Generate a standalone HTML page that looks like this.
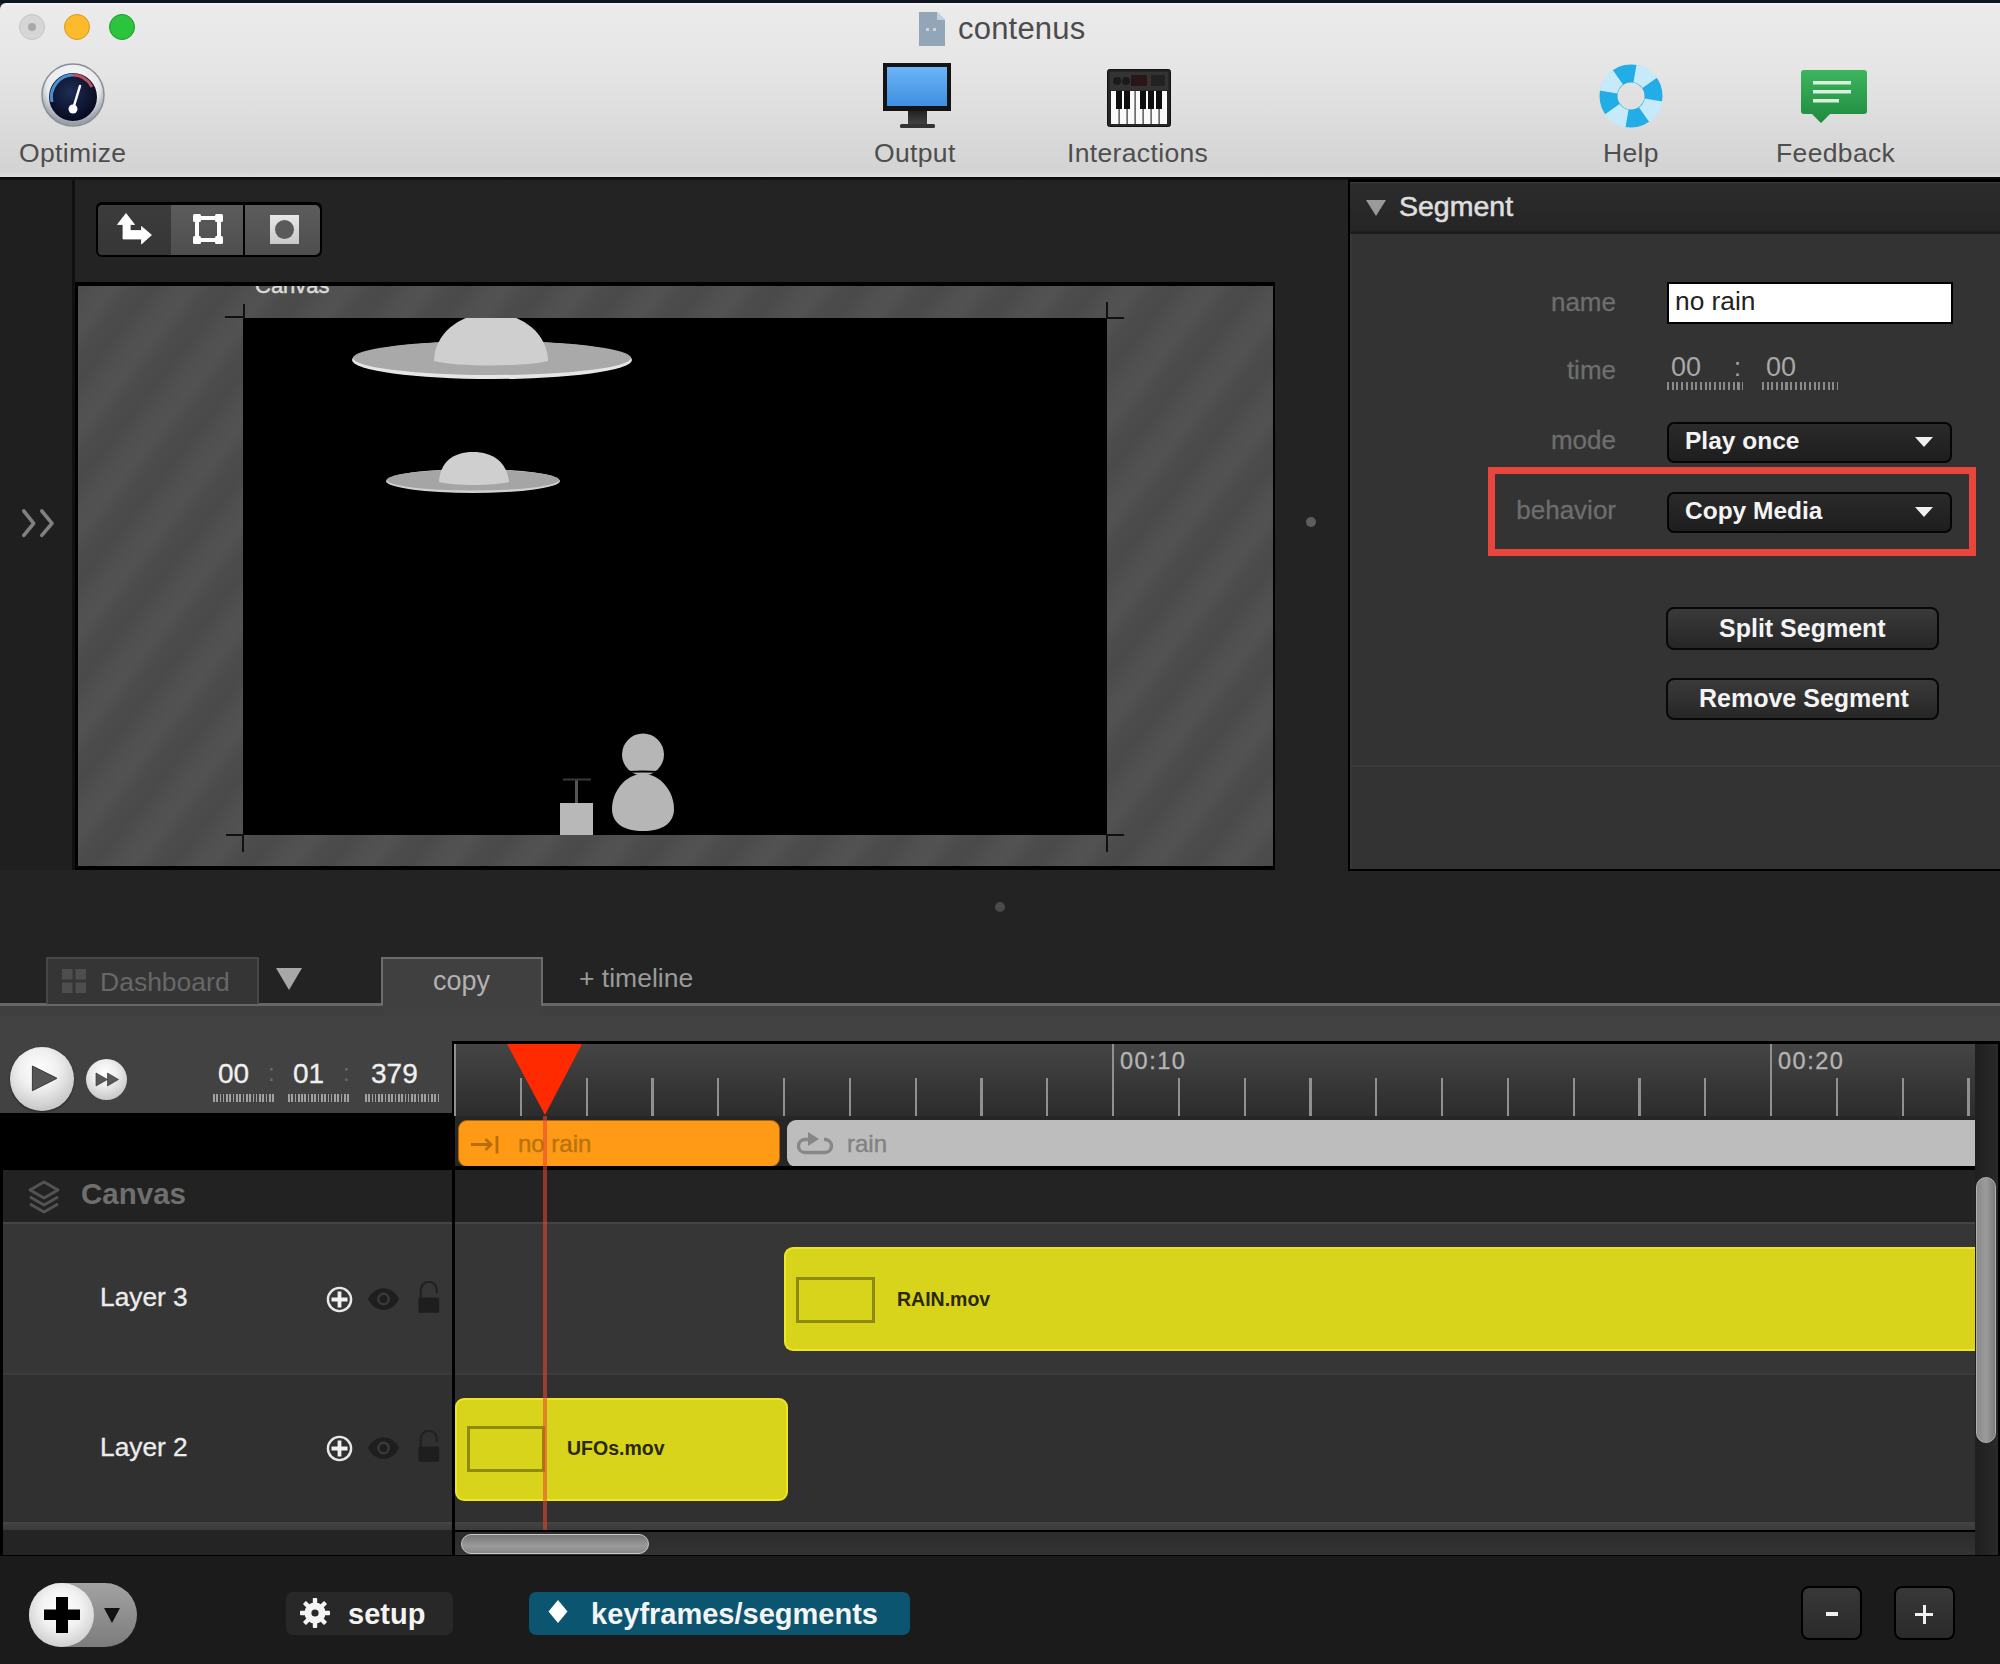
<!DOCTYPE html>
<html><head><meta charset="utf-8">
<style>
*{margin:0;padding:0;box-sizing:border-box}
html,body{width:2000px;height:1664px;overflow:hidden;background:#232323;font-family:"Liberation Sans",sans-serif}
.a{position:absolute}
.t{position:absolute;white-space:nowrap;line-height:1}
</style></head><body>
<!-- window top border -->
<div class="a" style="left:0;top:0;width:2000px;height:3px;background:#0e1420"></div>
<!-- toolbar -->
<div class="a" id="toolbar" style="left:0;top:3px;width:2000px;height:174px;background:linear-gradient(#f6f6f8,#ebebeb 3px,#e5e5e5 40%,#d3d3d3 97%,#dedede);border-radius:6px 0 0 0"></div>
<div class="a" style="left:0;top:177px;width:2000px;height:3px;background:linear-gradient(#0c0c0c 66%,#1a1a1a)"></div>
<!-- traffic lights -->
<div class="a" style="left:19px;top:14px;width:26px;height:26px;border-radius:50%;background:#d6d6d6;border:1px solid #c4c4c4"></div>
<div class="a" style="left:28px;top:23px;width:8px;height:8px;border-radius:50%;background:#a8a8a8"></div>
<div class="a" style="left:64px;top:14px;width:26px;height:26px;border-radius:50%;background:#fdba2c;border:1.5px solid #d69a18"></div>
<div class="a" style="left:109px;top:14px;width:26px;height:26px;border-radius:50%;background:#2bc43c;border:1.5px solid #189a28"></div>
<!-- title -->
<svg class="a" style="left:917px;top:11px" width="30" height="36" viewBox="0 0 30 36">
<path d="M2 1h18l8 8v26H2z" fill="#93a6b8"/><path d="M20 1v8h8z" fill="#c3d0dc"/>
<rect x="9" y="17" width="3" height="3" fill="#c8d4e0"/><rect x="16" y="17" width="3" height="3" fill="#c8d4e0"/>
</svg>
<div class="t" style="left:958px;top:13px;font-size:31px;letter-spacing:0.2px;color:#4c4c4c">contenus</div>

<!-- Optimize -->
<svg class="a" style="left:40px;top:62px" width="66" height="68" viewBox="0 0 66 68">
<defs>
<radialGradient id="og" cx="50%" cy="35%" r="60%"><stop offset="0" stop-color="#ffffff"/><stop offset="0.7" stop-color="#e8eaee"/><stop offset="1" stop-color="#9aa0a8"/></radialGradient>
<radialGradient id="od" cx="45%" cy="40%" r="60%"><stop offset="0" stop-color="#1f2c55"/><stop offset="1" stop-color="#070b20"/></radialGradient>
</defs>
<circle cx="33" cy="33" r="31" fill="url(#og)" stroke="#8a8f96" stroke-width="1.5"/>
<circle cx="33" cy="35" r="24" fill="url(#od)"/>
<path d="M12 40 A22 22 0 0 1 33 13" fill="none" stroke="#4a90d0" stroke-width="3"/>
<path d="M33 13 A22 22 0 0 1 52 25" fill="none" stroke="#c05060" stroke-width="3"/>
<path d="M33 47 L40 24" stroke="#fff" stroke-width="2.5" stroke-linecap="round"/>
<circle cx="33" cy="47" r="4.5" fill="#fff"/>
</svg>
<div class="t" style="left:19px;top:140px;font-size:26.5px;letter-spacing:0.35px;color:#4e4e4e">Optimize</div>

<!-- Output -->
<svg class="a" style="left:883px;top:63px" width="68" height="66" viewBox="0 0 68 66">
<defs><linearGradient id="scr" x1="0" y1="0" x2="0" y2="1"><stop offset="0" stop-color="#6cb4f8"/><stop offset="1" stop-color="#3f8fe0"/></linearGradient>
<linearGradient id="nk" x1="0" y1="0" x2="0" y2="1"><stop offset="0" stop-color="#222"/><stop offset="1" stop-color="#444"/></linearGradient></defs>
<rect x="0" y="0" width="68" height="48" fill="#141414"/>
<rect x="4" y="4" width="60" height="39" fill="url(#scr)"/>
<rect x="25" y="48" width="19" height="14" fill="url(#nk)"/>
<rect x="17" y="61" width="35" height="4" rx="1.5" fill="#333"/>
</svg>
<div class="t" style="left:874px;top:140px;font-size:26.5px;letter-spacing:0.35px;color:#4e4e4e">Output</div>

<!-- Interactions keyboard -->
<svg class="a" style="left:1107px;top:69px" width="64" height="58" viewBox="0 0 64 58">
<rect x="0.5" y="0.5" width="63" height="57" rx="2" fill="#262626" stroke="#111"/>
<rect x="3" y="3" width="58" height="18" fill="#333"/>
<circle cx="10" cy="12" r="4" fill="#1a1a1a"/><circle cx="19" cy="12" r="4" fill="#1a1a1a"/>
<rect x="24" y="6" width="16" height="11" fill="#2a1616"/>
<rect x="44" y="6" width="14" height="11" fill="#222"/>
<rect x="4" y="22" width="56" height="33" fill="#fafafa"/>
<g fill="#333"><rect x="11.5" y="22" width="1.2" height="33"/><rect x="19.5" y="22" width="1.2" height="33"/><rect x="27.5" y="22" width="1.2" height="33"/><rect x="35.5" y="22" width="1.2" height="33"/><rect x="43.5" y="22" width="1.2" height="33"/><rect x="51.5" y="22" width="1.2" height="33"/></g>
<g fill="#0e0e0e"><rect x="9" y="22" width="6" height="18"/><rect x="17" y="22" width="6" height="18"/><rect x="33" y="22" width="6" height="18"/><rect x="41" y="22" width="6" height="18"/><rect x="49" y="22" width="6" height="18"/></g>
</svg>
<div class="t" style="left:1067px;top:140px;font-size:26.5px;letter-spacing:0.35px;color:#4e4e4e">Interactions</div>

<!-- Help lifebuoy -->
<svg class="a" style="left:1598px;top:63px" width="66" height="66" viewBox="0 0 66 66">
<circle cx="33" cy="33" r="22.5" fill="none" stroke="#22ade6" stroke-width="18"/>
<g stroke="#c6eaf9" stroke-width="18" fill="none">
<path d="M33 10 A23 23 0 0 1 49.3 16.7" transform="rotate(10 33 33)"/>
<path d="M33 10 A23 23 0 0 1 49.3 16.7" transform="rotate(100 33 33)"/>
<path d="M33 10 A23 23 0 0 1 49.3 16.7" transform="rotate(190 33 33)"/>
<path d="M33 10 A23 23 0 0 1 49.3 16.7" transform="rotate(280 33 33)"/>
</g>
</svg>
<div class="t" style="left:1603px;top:140px;font-size:26.5px;letter-spacing:0.35px;color:#4e4e4e">Help</div>

<!-- Feedback -->
<svg class="a" style="left:1801px;top:70px" width="66" height="54" viewBox="0 0 66 54">
<defs><linearGradient id="fg" x1="0" y1="0" x2="0" y2="1"><stop offset="0" stop-color="#3cb55e"/><stop offset="1" stop-color="#1f8a3e"/></linearGradient></defs>
<path d="M3 0h60a3 3 0 0 1 3 3v38a3 3 0 0 1-3 3H29l-9 9-9-9H3a3 3 0 0 1-3-3V3a3 3 0 0 1 3-3z" fill="url(#fg)"/>
<g fill="#d8f0dc"><rect x="12" y="11" width="38" height="3.5"/><rect x="12" y="20" width="38" height="3.5"/><rect x="12" y="29" width="26" height="3.5"/></g>
</svg>
<div class="t" style="left:1776px;top:140px;font-size:26.5px;letter-spacing:0.35px;color:#4e4e4e">Feedback</div>


<!-- left sidebar -->
<div class="a" style="left:0;top:180px;width:72px;height:690px;background:#1f1f1f"></div>
<div class="a" style="left:72px;top:180px;width:3px;height:690px;background:#101010"></div>

<!-- canvas frame -->
<div class="a" style="left:75px;top:282px;width:1200px;height:588px;background:#000"></div>
<div class="a" id="frame" style="left:78px;top:286px;width:1195px;height:580px;background:repeating-linear-gradient(-52deg,#4a4a4a 0,#4c4c4c 16px,#525252 30px,#505050 44px,#4a4a4a 62px)"></div>
<div class="a" style="left:243px;top:318px;width:864px;height:517px;background:#000"></div>


<!-- left chevrons -->
<svg class="a" style="left:20px;top:507px" width="36" height="32" viewBox="0 0 36 32">
<path d="M3.8 4 L13.7 16.3 L3.8 28.3 M21.8 4 L32 16.3 L21.8 28.3" fill="none" stroke="#808080" stroke-width="3.6" stroke-linecap="round" stroke-linejoin="round"/>
</svg>
<!-- tool buttons -->
<div class="a" style="left:96px;top:202px;width:226px;height:55px;border-radius:6px;background:#000"></div>
<div class="a" style="left:98px;top:205px;width:73px;height:50px;border-radius:4px 0 0 4px;background:linear-gradient(#3c3c3c,#363636)"></div>
<div class="a" style="left:171px;top:205px;width:72px;height:50px;background:linear-gradient(#5c5c5c,#4e4e4e)"></div>
<div class="a" style="left:245px;top:205px;width:75px;height:50px;border-radius:0 5px 5px 0;background:linear-gradient(#5c5c5c,#4e4e4e)"></div>
<svg class="a" style="left:116px;top:212px" width="40" height="36" viewBox="0 0 40 36">
<path d="M10 1.5 L18.5 12.5 L14.2 12.5 L14.2 18.5 L25.5 18.5 L25.5 14.5 L35.5 23 L25.5 32 L25.5 27 L7 27 L7 12.5 L1.5 12.5 Z" fill="#fff" stroke="#fff" stroke-width="0.8" stroke-linejoin="round"/>
</svg>
<svg class="a" style="left:192px;top:213px" width="32" height="32" viewBox="0 0 32 32">
<rect x="5" y="5" width="22" height="22" fill="none" stroke="#fff" stroke-width="4"/>
<rect x="1" y="1" width="8" height="8" rx="1.5" fill="#fff"/><rect x="23" y="1" width="8" height="8" rx="1.5" fill="#fff"/>
<rect x="1" y="23" width="8" height="8" rx="1.5" fill="#fff"/><rect x="23" y="23" width="8" height="8" rx="1.5" fill="#fff"/>
</svg>
<div class="a" style="left:270px;top:215px;width:29px;height:29px;background:linear-gradient(#e8e8e8,#c8c8c8)"></div>
<div class="a" style="left:275px;top:220px;width:19px;height:19px;border-radius:50%;background:#5a5a5a"></div>

<!-- stage label (cut) -->
<div class="a" style="left:243px;top:286px;width:100px;height:10px;overflow:hidden">
<div class="t" style="left:12px;top:-11px;font-size:22px;color:#dadada;-webkit-text-stroke:0.5px #dadada">Canvas</div></div>
<!-- crop marks -->
<div class="a" style="left:243px;top:304px;width:2px;height:15px;background:#111"></div>
<div class="a" style="left:225px;top:316px;width:19px;height:2px;background:#111"></div>
<div class="a" style="left:1106px;top:302px;width:2px;height:17px;background:#111"></div>
<div class="a" style="left:1107px;top:317px;width:17px;height:2px;background:#111"></div>
<div class="a" style="left:242px;top:834px;width:2px;height:18px;background:#111"></div>
<div class="a" style="left:226px;top:834px;width:17px;height:2px;background:#111"></div>
<div class="a" style="left:1106px;top:834px;width:2px;height:18px;background:#111"></div>
<div class="a" style="left:1107px;top:834px;width:17px;height:2px;background:#111"></div>
<!-- stage content -->
<svg class="a" style="left:243px;top:318px" width="864" height="517" viewBox="0 0 864 517">
<!-- ufo 1 -->
<ellipse cx="249" cy="42" rx="140" ry="19" fill="#e6e6e6"/>
<ellipse cx="249" cy="40" rx="139" ry="17" fill="#a9a9a9"/>
<path d="M191 43 A57 48 0 0 1 305 43 C280 49 215 49 191 43 Z" fill="#cfcfcf"/>
<!-- ufo 2 -->
<ellipse cx="230" cy="163" rx="87" ry="12" fill="#d0d0d0"/>
<ellipse cx="230" cy="162" rx="86" ry="10.5" fill="#a5a5a5"/>
<path d="M196 164 C197 144 210 134 230 134 C250 134 264 144 266 164 C250 168 212 168 196 164 Z" fill="#cfcfcf"/>
<!-- figure -->
<circle cx="400" cy="436.5" r="21" fill="#b6b6b6"/>
<path d="M400 456 C382 456 369 474 369 491 C369 506 382 513 400 513 C418 513 431 506 431 491 C431 474 418 456 400 456 Z" fill="#b6b6b6"/>
<path d="M369 455 Q400 452 431 455" stroke="#000" stroke-width="2" fill="none"/>
<rect x="317" y="485" width="33" height="32" fill="#b8b8b8"/>
<rect x="332" y="462" width="3" height="23" fill="#555"/>
<rect x="320" y="460.5" width="28" height="2" fill="#383838"/>
</svg>
<!-- panel dots -->
<div class="a" style="left:1306px;top:517px;width:10px;height:10px;border-radius:50%;background:#5e5e5e"></div>
<div class="a" style="left:995px;top:902px;width:10px;height:10px;border-radius:50%;background:#4a4a4a"></div>

<!-- right panel -->
<div class="a" style="left:1348px;top:179px;width:652px;height:692px;background:#000"></div>
<div class="a" style="left:1350px;top:182px;width:650px;height:52px;background:linear-gradient(#3a3a3a 0,#2c2c2c 2px,#252525 49px,#1c1c1c 50px)"></div>
<div class="a" style="left:1350px;top:234px;width:650px;height:635px;background:linear-gradient(90deg,#3a3a3a,#333 3px)"></div>



<!-- panel header -->
<svg class="a" style="left:1365px;top:199px" width="22" height="18" viewBox="0 0 22 18"><path d="M1 1 L21 1 L11 17 Z" fill="#9a9a9a"/></svg>
<div class="t" style="left:1399px;top:192px;font-size:28.5px;color:#dedede;-webkit-text-stroke:0.6px #dedede">Segment</div>
<!-- labels -->
<div class="t" style="right:384px;top:289px;font-size:26px;color:#6e6e6e;-webkit-text-stroke:0.3px #6e6e6e">name</div>
<div class="t" style="right:384px;top:357px;font-size:26px;color:#6e6e6e;-webkit-text-stroke:0.3px #6e6e6e">time</div>
<div class="t" style="right:384px;top:427px;font-size:26px;color:#6e6e6e;-webkit-text-stroke:0.3px #6e6e6e">mode</div>
<div class="t" style="right:384px;top:497px;font-size:26px;color:#6e6e6e;-webkit-text-stroke:0.3px #6e6e6e">behavior</div>
<!-- name input -->
<div class="a" style="left:1667px;top:282px;width:286px;height:42px;background:#fff;border:2px solid #000"></div>
<div class="t" style="left:1675px;top:288px;font-size:26.3px;color:#222">no rain</div>
<!-- time -->
<div class="t" style="left:1671px;top:354px;font-size:27px;color:#a8a8a8">00</div>
<div class="t" style="left:1734px;top:355px;font-size:25px;color:#a8a8a8">:</div>
<div class="t" style="left:1766px;top:354px;font-size:27px;color:#a8a8a8">00</div>
<div class="a" style="left:1667px;top:382px;width:76px;height:8px;background:repeating-linear-gradient(90deg,#8a8a8a 0,#8a8a8a 2px,transparent 2px,transparent 4.7px)"></div>
<div class="a" style="left:1762px;top:382px;width:76px;height:8px;background:repeating-linear-gradient(90deg,#8a8a8a 0,#8a8a8a 2px,transparent 2px,transparent 4.7px)"></div>
<!-- dropdowns -->
<div class="a" style="left:1667px;top:422px;width:285px;height:41px;border-radius:7px;background:linear-gradient(#2a2a2a,#1e1e1e);border:2px solid #050505"></div>
<div class="t" style="left:1685px;top:429px;font-size:24.5px;font-weight:bold;color:#f4f4f4">Play once</div>
<svg class="a" style="left:1915px;top:437px" width="18" height="11" viewBox="0 0 18 11"><path d="M0 0 L18 0 L9 10 Z" fill="#f0f0f0"/></svg>
<div class="a" style="left:1667px;top:492px;width:285px;height:41px;border-radius:7px;background:linear-gradient(#2a2a2a,#1e1e1e);border:2px solid #050505"></div>
<div class="t" style="left:1685px;top:499px;font-size:24.5px;font-weight:bold;color:#f4f4f4">Copy Media</div>
<svg class="a" style="left:1915px;top:507px" width="18" height="11" viewBox="0 0 18 11"><path d="M0 0 L18 0 L9 10 Z" fill="#f0f0f0"/></svg>
<!-- red highlight -->
<div class="a" style="left:1488px;top:467px;width:488px;height:89px;border:7px solid #e8453c"></div>
<!-- buttons -->
<div class="a" style="left:1666px;top:607px;width:273px;height:43px;border-radius:8px;background:linear-gradient(#3a3a3a,#262626);border:2px solid #080808"></div>
<div class="t" style="left:1719px;top:616px;font-size:25px;font-weight:bold;color:#f4f4f4">Split Segment</div>
<div class="a" style="left:1666px;top:678px;width:273px;height:42px;border-radius:8px;background:linear-gradient(#3a3a3a,#262626);border:2px solid #080808"></div>
<div class="t" style="left:1699px;top:686px;font-size:25px;font-weight:bold;color:#f4f4f4">Remove Segment</div>
<div class="a" style="left:1350px;top:765px;width:650px;height:2px;background:#3a3a3a"></div>

<!-- ===== timeline ===== -->
<!-- tab bar line -->
<div class="a" style="left:0;top:1003px;width:2000px;height:2.5px;background:#676767"></div>
<div class="a" style="left:0;top:1005.5px;width:2000px;height:551px;background:#424242"></div>
<div class="a" style="left:0;top:1005.5px;width:2000px;height:10px;background:#3f3f3f"></div>
<!-- dashboard tab -->
<div class="a" style="left:46px;top:957px;width:213px;height:47px;background:#353535;border:2px solid #474747;border-bottom:none"></div>
<!-- copy tab -->
<div class="a" style="left:381px;top:957px;width:162px;height:48px;background:#404040;border:2px solid #6c6c6c;border-bottom:none"></div>
<div class="a" style="left:383px;top:1003px;width:158px;height:13px;background:linear-gradient(#404040,#414141)"></div>

<!-- left black under header -->
<div class="a" style="left:0;top:1113px;width:455px;height:57px;background:#000"></div>
<!-- ruler -->
<div class="a" style="left:452px;top:1041px;width:1548px;height:515px;background:#000"></div>
<div class="a" style="left:455px;top:1044px;width:1520px;height:72px;background:linear-gradient(#454545,#2c2c2c)"></div>
<!-- segments row bg -->
<div class="a" style="left:455px;top:1116px;width:1520px;height:54px;background:#262626"></div>
<!-- canvas row -->
<div class="a" style="left:3px;top:1170px;width:449px;height:52px;background:#222"></div>
<div class="a" style="left:455px;top:1170px;width:1520px;height:52px;background:#232323"></div>
<!-- layer rows -->
<div class="a" style="left:3px;top:1222px;width:449px;height:2px;background:#444"></div>
<div class="a" style="left:3px;top:1224px;width:449px;height:149px;background:#363636"></div>
<div class="a" style="left:455px;top:1222px;width:1520px;height:2px;background:#444"></div>
<div class="a" style="left:455px;top:1224px;width:1520px;height:149px;background:#363636"></div>
<div class="a" style="left:3px;top:1373px;width:449px;height:2px;background:#3c3c3c"></div>
<div class="a" style="left:3px;top:1375px;width:449px;height:147px;background:#303030"></div>
<div class="a" style="left:455px;top:1373px;width:1520px;height:2px;background:#3c3c3c"></div>
<div class="a" style="left:455px;top:1375px;width:1520px;height:147px;background:#303030"></div>
<div class="a" style="left:3px;top:1522px;width:449px;height:8px;background:linear-gradient(#444,#3a3a3a)"></div>
<div class="a" style="left:455px;top:1522px;width:1520px;height:8px;background:linear-gradient(#444,#3a3a3a)"></div>
<div class="a" style="left:0;top:1170px;width:3px;height:386px;background:#000"></div>
<!-- h scrollbar track -->
<div class="a" style="left:0;top:1530px;width:452px;height:26px;background:#000"></div>
<div class="a" style="left:3px;top:1530px;width:449px;height:25px;background:#242424"></div>
<div class="a" style="left:455px;top:1532px;width:1520px;height:23px;background:linear-gradient(#2b2b2b,#333)"></div>
<!-- v scrollbar track -->
<div class="a" style="left:1975px;top:1044px;width:23px;height:511px;background:linear-gradient(90deg,#1f1f1f,#2a2a2a)"></div>

<!-- bottom bar -->
<div class="a" style="left:0;top:1556px;width:2000px;height:108px;background:#1b1b1b"></div>

<!-- tabs content -->
<svg class="a" style="left:62px;top:969px" width="25" height="25" viewBox="0 0 25 25"><g fill="#4e4e4e"><rect x="0" y="0" width="10.5" height="10.5"/><rect x="13.5" y="0" width="10.5" height="10.5"/><rect x="0" y="13.5" width="10.5" height="10.5"/><rect x="13.5" y="13.5" width="10.5" height="10.5"/></g></svg>
<div class="t" style="left:100px;top:969px;font-size:26.5px;color:#686868">Dashboard</div>
<svg class="a" style="left:275px;top:967px" width="28" height="24" viewBox="0 0 28 24"><path d="M1 1 L27 1 L14 23 Z" fill="#a8a8a8"/></svg>
<div class="t" style="left:433px;top:968px;font-size:27px;color:#b2b2b2">copy</div>
<div class="t" style="left:579px;top:965px;font-size:26.5px;color:#9a9a9a">+ timeline</div>

<!-- play controls -->
<div class="a" style="left:10px;top:1047px;width:64px;height:64px;border-radius:50%;background:radial-gradient(circle at 45% 35%,#ffffff 0,#f0f0f0 35%,#c8c8c8 75%,#a0a0a0 100%);box-shadow:0 1px 2px #222"></div>
<svg class="a" style="left:30px;top:1061px" width="30" height="36" viewBox="0 0 30 36"><path d="M2.4 5 L27 17.3 L2.4 29.7 Z" fill="#555" stroke="#3a3a3a" stroke-width="1" stroke-linejoin="round"/></svg>
<div class="a" style="left:86px;top:1059px;width:41px;height:41px;border-radius:50%;background:radial-gradient(circle at 45% 35%,#ffffff 0,#eeeeee 35%,#c4c4c4 80%,#9c9c9c 100%)"></div>
<svg class="a" style="left:95px;top:1070px" width="25" height="18" viewBox="0 0 25 18"><path d="M1 3 L12.5 9.5 L1 16 Z M12.5 3 L23.5 9.5 L12.5 16 Z" fill="#575757" stroke="#3c3c3c" stroke-width="0.7" stroke-linejoin="round"/></svg>
<!-- timecode -->
<div class="t" style="left:218px;top:1060px;font-size:28px;color:#f0f0f0;-webkit-text-stroke:0.3px #f0f0f0">00</div>
<div class="t" style="left:268px;top:1061px;font-size:24px;color:#6a6a6a">:</div>
<div class="t" style="left:293px;top:1060px;font-size:28px;color:#f0f0f0;-webkit-text-stroke:0.3px #f0f0f0">01</div>
<div class="t" style="left:343px;top:1061px;font-size:24px;color:#6a6a6a">:</div>
<div class="t" style="left:371px;top:1060px;font-size:28px;color:#f0f0f0;-webkit-text-stroke:0.3px #f0f0f0">379</div>
<div class="a" style="left:213px;top:1094px;width:63px;height:8px;background:repeating-linear-gradient(90deg,#a0a0a0 0,#a0a0a0 1.6px,transparent 1.6px,transparent 3.3px)"></div>
<div class="a" style="left:288px;top:1094px;width:63px;height:8px;background:repeating-linear-gradient(90deg,#a0a0a0 0,#a0a0a0 1.6px,transparent 1.6px,transparent 3.3px)"></div>
<div class="a" style="left:365px;top:1094px;width:76px;height:8px;background:repeating-linear-gradient(90deg,#a0a0a0 0,#a0a0a0 1.6px,transparent 1.6px,transparent 3.3px)"></div>

<!-- ruler ticks -->
<div class="a" style="left:454.0px;top:1044px;width:2.2px;height:72px;background:#909090"></div>
<div class="a" style="left:519.8px;top:1078px;width:2.2px;height:38px;background:#909090"></div>
<div class="a" style="left:585.6px;top:1078px;width:2.2px;height:38px;background:#909090"></div>
<div class="a" style="left:651.4px;top:1078px;width:2.2px;height:38px;background:#909090"></div>
<div class="a" style="left:717.2px;top:1078px;width:2.2px;height:38px;background:#909090"></div>
<div class="a" style="left:783.0px;top:1078px;width:2.2px;height:38px;background:#909090"></div>
<div class="a" style="left:848.8px;top:1078px;width:2.2px;height:38px;background:#909090"></div>
<div class="a" style="left:914.6px;top:1078px;width:2.2px;height:38px;background:#909090"></div>
<div class="a" style="left:980.4px;top:1078px;width:2.2px;height:38px;background:#909090"></div>
<div class="a" style="left:1046.2px;top:1078px;width:2.2px;height:38px;background:#909090"></div>
<div class="a" style="left:1112.0px;top:1044px;width:2.2px;height:72px;background:#909090"></div>
<div class="a" style="left:1177.8px;top:1078px;width:2.2px;height:38px;background:#909090"></div>
<div class="a" style="left:1243.6px;top:1078px;width:2.2px;height:38px;background:#909090"></div>
<div class="a" style="left:1309.4px;top:1078px;width:2.2px;height:38px;background:#909090"></div>
<div class="a" style="left:1375.2px;top:1078px;width:2.2px;height:38px;background:#909090"></div>
<div class="a" style="left:1441.0px;top:1078px;width:2.2px;height:38px;background:#909090"></div>
<div class="a" style="left:1506.8px;top:1078px;width:2.2px;height:38px;background:#909090"></div>
<div class="a" style="left:1572.6px;top:1078px;width:2.2px;height:38px;background:#909090"></div>
<div class="a" style="left:1638.4px;top:1078px;width:2.2px;height:38px;background:#909090"></div>
<div class="a" style="left:1704.2px;top:1078px;width:2.2px;height:38px;background:#909090"></div>
<div class="a" style="left:1770.0px;top:1044px;width:2.2px;height:72px;background:#909090"></div>
<div class="a" style="left:1835.8px;top:1078px;width:2.2px;height:38px;background:#909090"></div>
<div class="a" style="left:1901.6px;top:1078px;width:2.2px;height:38px;background:#909090"></div>
<div class="a" style="left:1967.4px;top:1078px;width:2.2px;height:38px;background:#909090"></div>
<div class="t" style="left:1120px;top:1050px;font-size:23.5px;letter-spacing:1.5px;color:#b4b4b4;-webkit-text-stroke:0.35px #b4b4b4">00:10</div>
<div class="t" style="left:1778px;top:1050px;font-size:23.5px;letter-spacing:1.5px;color:#b4b4b4;-webkit-text-stroke:0.35px #b4b4b4">00:20</div>

<!-- segments -->
<div class="a" style="left:457.5px;top:1119.5px;width:322px;height:47px;border-radius:9px;background:#ff9a16;border:1.5px solid #a86408"></div>
<svg class="a" style="left:470px;top:1133px" width="30" height="24" viewBox="0 0 30 24"><path d="M1 11.5 H21 M15.5 6 L21 11.5 L15.5 17 M27 3 V20.5" fill="none" stroke="#b86e0c" stroke-width="2.8"/></svg>
<div class="t" style="left:518px;top:1132px;font-size:24px;color:#b8730c;-webkit-text-stroke:0.4px #b8730c">no rain</div>
<div class="a" style="left:787px;top:1120px;width:1188px;height:47px;border-radius:9px 0 0 9px;background:#bdbdbd"></div>
<svg class="a" style="left:796px;top:1130px" width="38" height="28" viewBox="0 0 38 28"><path d="M13 9.5 H8.5 A6.5 6.5 0 0 0 2.5 16 A6.5 6.5 0 0 0 8.5 22.5 H29.5 A6.5 6.5 0 0 0 35.5 16 A6.5 6.5 0 0 0 29.5 9.5 H28" fill="none" stroke="#878787" stroke-width="3.4"/><path d="M12 2 L23 9 L12 16 Z" fill="#878787"/></svg>
<div class="t" style="left:847px;top:1132px;font-size:24px;color:#828282;-webkit-text-stroke:0.4px #828282">rain</div>
<div class="a" style="left:455px;top:1166px;width:1520px;height:4px;background:#000"></div>

<!-- canvas row -->
<svg class="a" style="left:27px;top:1180px" width="34" height="36" viewBox="0 0 34 36">
<g fill="none" stroke="#535353" stroke-width="3" stroke-linejoin="round"><path d="M17 2 L31 10 L17 18 L3 10 Z"/><path d="M3 17 L17 25 L31 17"/><path d="M3 24 L17 32 L31 24"/></g></svg>
<div class="t" style="left:81px;top:1179px;font-size:29.5px;font-weight:bold;color:#6f6f6f">Canvas</div>

<!-- layer rows content -->
<div class="t" style="left:100px;top:1284px;font-size:26.3px;color:#ececec;-webkit-text-stroke:0.3px #ececec">Layer 3</div>
<div class="t" style="left:100px;top:1434px;font-size:26.3px;color:#ececec;-webkit-text-stroke:0.3px #ececec">Layer 2</div>

<svg class="a" style="left:326px;top:1286px" width="27" height="27" viewBox="0 0 27 27"><circle cx="13.5" cy="13.5" r="11.6" fill="none" stroke="#e8e8e8" stroke-width="2.4"/><path d="M13.5 5.5 V21.5 M5.5 13.5 H21.5" stroke="#f2f2f2" stroke-width="3.8"/></svg>
<svg class="a" style="left:367px;top:1288px" width="33" height="22" viewBox="0 0 33 22"><path d="M1 11 C8 -3.5 25 -3.5 32 11 C25 25.5 8 25.5 1 11 Z" fill="#1e1e1e"/><circle cx="16.5" cy="11" r="5.2" fill="none" stroke="#393939" stroke-width="2.6"/></svg>
<svg class="a" style="left:417px;top:1281px" width="24" height="33" viewBox="0 0 24 33"><path d="M3.8 17 V8.8 A8 8 0 0 1 19.8 8.8 V12" fill="none" stroke="#222" stroke-width="2.4"/><rect x="1.4" y="16.6" width="20.8" height="15.2" rx="1.5" fill="#1e1e1e"/></svg>

<svg class="a" style="left:326px;top:1435px" width="27" height="27" viewBox="0 0 27 27"><circle cx="13.5" cy="13.5" r="11.6" fill="none" stroke="#e8e8e8" stroke-width="2.4"/><path d="M13.5 5.5 V21.5 M5.5 13.5 H21.5" stroke="#f2f2f2" stroke-width="3.8"/></svg>
<svg class="a" style="left:367px;top:1437px" width="33" height="22" viewBox="0 0 33 22"><path d="M1 11 C8 -3.5 25 -3.5 32 11 C25 25.5 8 25.5 1 11 Z" fill="#1e1e1e"/><circle cx="16.5" cy="11" r="5.2" fill="none" stroke="#393939" stroke-width="2.6"/></svg>
<svg class="a" style="left:417px;top:1430px" width="24" height="33" viewBox="0 0 24 33"><path d="M3.8 17 V8.8 A8 8 0 0 1 19.8 8.8 V12" fill="none" stroke="#222" stroke-width="2.4"/><rect x="1.4" y="16.6" width="20.8" height="15.2" rx="1.5" fill="#1e1e1e"/></svg>

<!-- clips -->
<div class="a" style="left:784px;top:1247px;width:1191px;height:104px;border-radius:9px 0 0 9px;background:#d8d41c;border:2px solid #eee622;border-right:none"></div>
<div class="a" style="left:796px;top:1277px;width:79px;height:46px;border:3px solid #8f8a0a"></div>
<div class="t" style="left:897px;top:1290px;font-size:19.5px;font-weight:bold;color:#2a2800">RAIN.mov</div>
<div class="a" style="left:455px;top:1398px;width:333px;height:103px;border-radius:9px;background:#d8d41c;border:2px solid #eee622"></div>
<div class="a" style="left:467px;top:1426px;width:78px;height:46px;border:3px solid #8f8a0a"></div>
<div class="t" style="left:567px;top:1439px;font-size:19.5px;font-weight:bold;color:#2a2800">UFOs.mov</div>

<!-- playhead -->
<div class="a" style="left:543.2px;top:1116px;width:3.6px;height:414px;background:rgba(230,70,50,0.58)"></div>
<svg class="a" style="left:507px;top:1044px" width="76" height="72" viewBox="0 0 76 72"><path d="M0 0 L75 0 L38 71 Z" fill="#ff2a00"/></svg>

<!-- scrollbar thumbs -->
<div class="a" style="left:461px;top:1534px;width:188px;height:20px;border-radius:10px;background:linear-gradient(#777,#9a9a9a 60%,#888);border:1.5px solid #c8c8c8"></div>
<div class="a" style="left:1976px;top:1177px;width:20px;height:266px;border-radius:10px;background:linear-gradient(90deg,#8a8a8a,#9c9c9c 50%,#7a7a7a);border:1.5px solid #b0b0b0"></div>

<!-- bottom bar content -->
<div class="a" style="left:29px;top:1583px;width:108px;height:64px;border-radius:32px;background:linear-gradient(#a2a2a2,#7c7c7c)"></div>
<div class="a" style="left:29px;top:1583px;width:65px;height:64px;border-radius:50%;background:radial-gradient(circle at 50% 40%,#ffffff 0,#f2f2f2 40%,#c8c8c8 85%,#aaa 100%)"></div>
<svg class="a" style="left:44px;top:1597px" width="36" height="36" viewBox="0 0 36 36"><path d="M12 0 H24 V12.5 H36 V23 H24 V36 H12 V23 H0 V12.5 H12 Z" fill="#000"/></svg>
<svg class="a" style="left:104px;top:1608px" width="16" height="15" viewBox="0 0 16 15"><path d="M0 0 L16 0 L8 15 Z" fill="#111"/></svg>

<div class="a" style="left:286px;top:1592px;width:167px;height:43px;border-radius:7px;background:#282828"></div>
<svg class="a" style="left:299px;top:1597px" width="32" height="32" viewBox="0 0 32 32"><g fill="#f4f4f4">
<circle cx="16" cy="16" r="10.5"/>
<rect x="13.8" y="1" width="4.4" height="30" rx="0.8"/><rect x="13.8" y="1" width="4.4" height="30" rx="0.8" transform="rotate(45 16 16)"/><rect x="13.8" y="1" width="4.4" height="30" rx="0.8" transform="rotate(90 16 16)"/><rect x="13.8" y="1" width="4.4" height="30" rx="0.8" transform="rotate(135 16 16)"/>
</g><circle cx="16" cy="16" r="3.6" fill="#282828"/></svg>
<div class="t" style="left:348px;top:1600px;font-size:29px;font-weight:bold;color:#f4f4f4">setup</div>

<div class="a" style="left:529px;top:1592px;width:381px;height:43px;border-radius:7px;background:#0b5570"></div>
<svg class="a" style="left:548px;top:1600px" width="20" height="23" viewBox="0 0 20 23"><path d="M10 0 L19.5 11.5 L10 23 L0.5 11.5 Z" fill="#fff"/></svg>
<div class="t" style="left:591px;top:1600px;font-size:29px;font-weight:bold;color:#f4f4f4">keyframes/segments</div>

<div class="a" style="left:1801px;top:1586px;width:61px;height:54px;border-radius:8px;background:linear-gradient(#383838,#2a2a2a);border:2.5px solid #000"></div>
<div class="a" style="left:1826px;top:1612px;width:12px;height:4px;background:#f0f0f0"></div>
<div class="a" style="left:1894px;top:1586px;width:61px;height:54px;border-radius:8px;background:linear-gradient(#383838,#2a2a2a);border:2.5px solid #000"></div>
<div class="a" style="left:1915px;top:1613px;width:18px;height:3px;background:#f0f0f0"></div>
<div class="a" style="left:1922.5px;top:1605px;width:3px;height:19px;background:#f0f0f0"></div>

</body></html>
